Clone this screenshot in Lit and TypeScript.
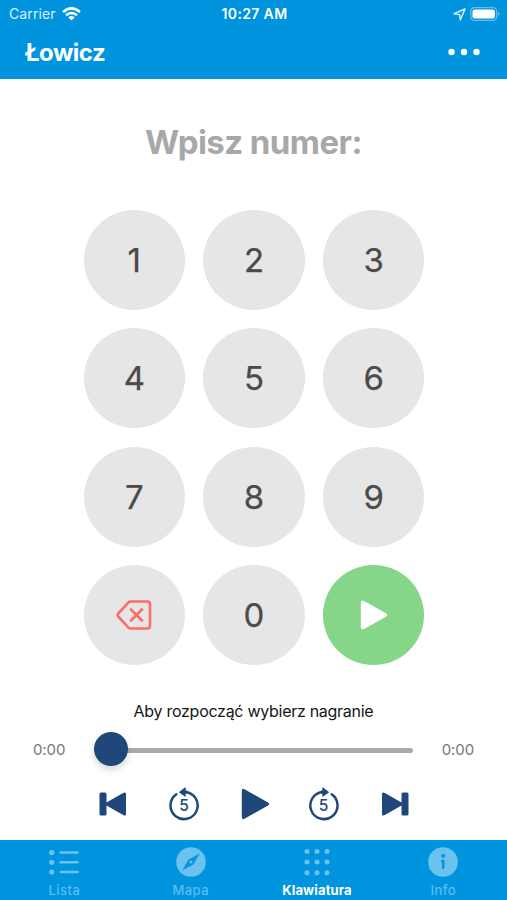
import { LitElement, html, css, svg } from "lit";
import { customElement } from "lit/decorators.js";

const skip = (flip: boolean) => html`<svg class="ico ${flip ? "flip" : ""}" width="28" height="24" viewBox="0 0 28 24">
  <path d="M2 .5h4q1.500 0 1.500 1.500v8.400L24.600 .8Q26.800 -.2 27 2v20q-.2 2.200-2.400 1.200L7.500 13.600v8.400q0 1.500-1.500 1.500H2Q.5 23.500 .5 22V2Q.5 .5 2 .5z"/></svg>`;
const jump = (flip: boolean) => html`<span class="jump ${flip ? "fwd" : "back"}">
  <svg class="ico ${flip ? "flip" : ""}" width="32" height="34" viewBox="0 0 32 34">
    <path class="ring" d="M8.300 7.300A13.600 13.600 0 1 0 17 4.900"/>
    <path d="M10.800 5.200 16.900 .6Q17.700 .1 17.700 1V3.400H19V6.400L17.700 6.700V9.100Q17.700 10 16.900 9.500z"/>
  </svg><span class="five">5</span></span>`;

const tabs = [
  { label: "Lista", active: false, icon: html`<svg class="tabico" width="30" height="30" viewBox="0 0 30 30">
      ${[5.500, 15.300, 25].map((y) => svg`<circle cx="2.700" cy=${y} r="2.600"/><rect x="10.300" y=${y - 1.300} width="19.500" height="2.600" rx="1.200"/>`)}</svg>` },
  { label: "Mapa", active: false, icon: html`<svg class="tabico" width="30" height="30" viewBox="0 0 30 30">
      <circle cx="15" cy="15" r="14.800"/><path class="cut" d="M23.800 6.500 17.500 17.500 6.200 23.500 12.500 12.500z"/><circle cx="15" cy="15" r="1.500"/></svg>` },
  { label: "Klawiatura", active: true, icon: html`<svg class="tabico" width="30" height="30" viewBox="0 0 30 30">
      ${[4.500, 15, 25.800].map((y) => [5, 15, 25].map((x) => svg`<circle cx=${x} cy=${y} r="2.500"/>`))}</svg>` },
  { label: "Info", active: false, icon: html`<svg class="tabico" width="30" height="30" viewBox="0 0 30 30">
      <circle cx="15" cy="15" r="14.800"/><circle class="cut" cx="15.200" cy="8.800" r="2"/><path class="stem" d="M14.200 14h1v6.700"/></svg>` },
];

@customElement("app-root")
export class AppRoot extends LitElement {
  static styles = css`
    :host { display: flex; flex-direction: column; width: 507px; height: 900px; overflow: hidden;
      background: #fff; font-family: Inter, "Liberation Sans", sans-serif; }
    * { box-sizing: border-box; }
    svg { display: block; flex: none; }
    header { height: 79px; background: #0094df; color: #fff; flex: none; }
    .status { height: 27px; display: grid; grid-template-columns: 1fr auto 1fr; align-items: center;
      padding: 1px 7px 0 9px; font-size: 14px; line-height: 26px; }
    .left, .right { display: flex; align-items: center; }
    .left { gap: 6px; color: #d9f2ff; letter-spacing: .1px; }
    .right { justify-content: flex-end; gap: 4px; }
    .clock { font-weight: 600; letter-spacing: .35px; }
    .bar { height: 50px; display: flex; align-items: center; justify-content: space-between; padding: 0 27px 0 25px; }
    .name { font-size: 24px; font-weight: 700; letter-spacing: -.5px; line-height: 50px; padding-top: 1px; }
    h1 { margin: 42px 0 0; height: 42px; line-height: 42px; text-align: center; color: #a8a8a8;
      font-size: 33px; font-weight: 700; letter-spacing: -.55px; }
    .pad { display: grid; grid-template-columns: repeat(3, 101.500px); grid-auto-rows: 100px;
      gap: 18.500px 18.200px; justify-content: center; margin: 46.700px 0 0 1px; }
    .key { border-radius: 50%; background: #e6e6e6; color: #4b4b4b; font-size: 33px; font-weight: 400;
      -webkit-text-stroke: .25px #4b4b4b; display: flex; align-items: center; justify-content: center; }
    .go { background: #85d689; }
    .hint { margin-top: 34.800px; height: 22px; line-height: 22px; text-align: center; font-size: 16px;
      letter-spacing: -.28px; color: #151515; }
    .seek { height: 34px; margin-top: 10.500px; display: flex; align-items: center; padding: 0 33px; color: #777; font-size: 15px;
      letter-spacing: -.1px; }
    .track { flex: 1; height: 5px; margin: 2px 28.500px 0 28.500px; border-radius: 3px; background: #a9a9a9;
      display: flex; align-items: center; }
    .thumb { width: 34px; height: 34px; margin: -3px 0 0 0; border-radius: 50%; background: #20477a; flex: none;
      box-shadow: 0 4px 7px rgba(0,0,0,.15); }
    .controls { margin-top: 18px; height: 40px; display: flex; align-items: center; padding-left: 99px; }
    .ico { fill: #20477a; }
    .ring { fill: none; stroke: #20477a; stroke-width: 2.500; stroke-linecap: round; }
    .flip { transform: scaleX(-1); }
    .jump { display: grid; place-items: center; }
    .back { margin: 0 41px 0 41px; }
    .fwd { margin: 0 41.500px 0 37.500px; }
    .jump > * { grid-area: 1 / 1; }
    .five { font-size: 15.500px; font-weight: 500; line-height: 18px; color: #20477a; padding-top: 3px; }
    nav { margin-top: auto; height: 60px; flex: none; background: #0094df; display: grid; grid-template-columns: repeat(4, 1fr);
      color: #5bbcef; padding: 0 .5px 0 1.200px; }
    .tab { display: flex; flex-direction: column; align-items: center; padding-top: 7px; font-size: 13px; font-weight: 500;
      letter-spacing: .45px; line-height: 18px; gap: 4px; }
    .tabico { fill: #6cc2ef; }
    .cut { fill: #0994dd; }
    .stem { fill: none; stroke: #0994dd; stroke-width: 2.700; stroke-linecap: round; stroke-linejoin: round; }
    .active { color: #fff; font-weight: 700; letter-spacing: .15px; }
  `;

  render() {
    return html`
      <header>
        <div class="status">
          <div class="left"><span>Carrier</span>
            <svg width="19" height="14" viewBox="0 0 19 14" fill="none" stroke="#fff" stroke-width="2.500">
              <path d="M1 5.100Q9.500-2.400 18 5.100M4 8.300Q9.500 3.700 15 8.300"/><path d="M6.300 10.300Q9.500 7.700 12.700 10.300L9.500 13.600z" fill="#fff" stroke="none"/></svg>
          </div>
          <span class="clock">10:27 AM</span>
          <div class="right">
            <svg width="13" height="13" viewBox="0 0 13 13" fill="none" stroke="#d9f2ff" stroke-width="1.400" stroke-linejoin="round"><path d="M12 1 1.200 5.700 6.500 6.500 7.300 12z"/></svg>
            <svg width="30" height="14" viewBox="0 0 30 14"><rect x=".7" y=".7" width="26" height="12.600" rx="3.800" fill="none" stroke="#65bdec" stroke-width="1.300"/><rect x="2.500" y="2.500" width="22.400" height="9" rx="2.200" fill="#fff"/><path d="M28 5q1.600.5 1.600 2T28 9z" fill="#65bdec"/></svg>
          </div>
        </div>
        <div class="bar"><span class="name">Łowicz</span>
          <svg width="32" height="8" viewBox="0 0 32 8" fill="#fff"><circle cx="3.500" cy="4" r="3.200"/><circle cx="16" cy="4" r="3.200"/><circle cx="28.500" cy="4" r="3.200"/></svg>
        </div>
      </header>
      <h1>Wpisz numer:</h1>
      <div class="pad">
        ${[1, 2, 3, 4, 5, 6, 7, 8, 9].map((n) => html`<div class="key">${n}</div>`)}
        <div class="key"><svg width="36" height="30" viewBox="0 0 36 30" fill="none" stroke="#fc6c6c" stroke-width="2.600" stroke-linecap="round" stroke-linejoin="round">
          <path d="M14.500 1.500H31.500Q34 1.500 34 4V26Q34 28.500 31.500 28.500H14.500Q13.300 28.500 12.500 27.700L2.200 16.500Q1 15 2.200 13.500L12.500 2.300Q13.300 1.500 14.500 1.500z"/><path d="M15 9.500 26 20.500M26 9.500 15 20.500"/></svg></div>
        <div class="key">0</div>
        <div class="key go"><svg width="28" height="30" viewBox="0 0 28 30" fill="#fff"><path d="M.8 3Q.8-.6 4 1L25.500 13Q28.600 15 25.500 17L4 29Q.8 30.600.8 27z"/></svg></div>
      </div>
      <div class="hint">Aby rozpocząć wybierz nagranie</div>
      <div class="seek"><span>0:00</span><div class="track"><div class="thumb"></div></div><span>0:00</span></div>
      <div class="controls">
        ${skip(false)}${jump(false)}
        <svg class="ico" width="29" height="32" viewBox="0 0 29 32"><path d="M.8 3Q.8 0 3.500 1.200L27 14.500Q29.500 16 27 17.500L3.500 30.800Q.8 32 .8 29z"/></svg>
        ${jump(true)}${skip(true)}
      </div>
      <nav>${tabs.map((t) => html`<div class="tab ${t.active ? "active" : ""}">${t.icon}<span>${t.label}</span></div>`)}</nav>
    `;
  }
}
